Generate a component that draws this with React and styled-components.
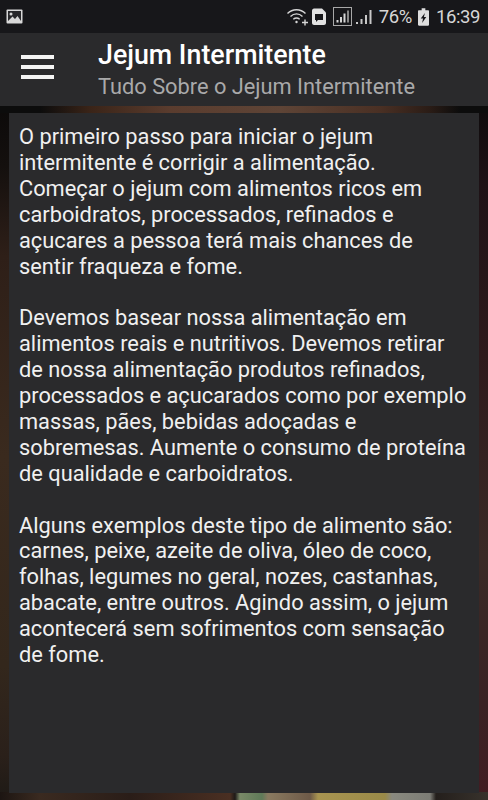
import styled, { createGlobalStyle } from "styled-components";

const GlobalStyle = createGlobalStyle`
  html, body {
    margin: 0;
    padding: 0;
    background: #1a1512;
  }
  * { box-sizing: border-box; }
`;

const Screen = styled.div`
  width: 488px;
  height: 800px;
  display: flex;
  flex-direction: column;
  overflow: hidden;
  font-family: Roboto, "Liberation Sans", sans-serif;
  color: #fff;
`;

const StatusBar = styled.div`
  height: 33px;
  flex: none;
  display: flex;
  align-items: center;
  justify-content: space-between;
  padding: 0 8px 0 6px;
  background: #17171a;
  color: #d6d6d6;
`;

const StatusRight = styled.div`
  display: flex;
  align-items: center;
  font-size: 18.5px;
  letter-spacing: -0.4px;
`;

const Percent = styled.span`
  margin: 0 6px 0 7px;
`;

const Clock = styled.span`
  margin-left: 7px;
`;

const Toolbar = styled.header`
  height: 73px;
  flex: none;
  display: flex;
  align-items: center;
  background: #2a2a2c;
`;

const MenuButton = styled.div`
  width: 98px;
  flex: none;
  display: flex;
  flex-direction: column;
  gap: 6px;
  margin-top: -5px;
  padding: 0 0 0 21px;
`;

const MenuLine = styled.span`
  display: block;
  width: 33px;
  height: 4px;
  background: #f4f4f4;
`;

const Titles = styled.div`
  display: flex;
  flex-direction: column;
  margin-top: 3px;
`;

const Title = styled.h1`
  margin: 0;
  font-size: 26.8px;
  line-height: 32px;
  font-weight: 500;
  color: #fff;
`;

const Subtitle = styled.div`
  font-size: 21.8px;
  line-height: 32px;
  color: #a9a9aa;
`;

// the page behind the card is a blurred photo, only its edges stay visible
const Backdrop = styled.main`
  flex: 1;
  min-height: 0;
  display: flex;
  padding: 7px 9px 7.5px;
  background:
    linear-gradient(90deg, #1c1512 0, #3a2a20 40px, #2a1d18 130px, #4a2f22 230px, #1e1a18 235px, #7a8a68 240px, #5f7a58 262px, #8a7a60 268px, #6e5a48 310px, #a89450 318px, #9a8a48 385px, #8a8a80 392px, #7d7d76 430px, #241f1c 436px, #38322c 488px) bottom / 100% 8px no-repeat,
    linear-gradient(90deg, #0c0c0c 0, #0c0c0c 40px, #3a2418 90px, #5a3c2e 170px, #5e4436 280px, #4a3024 380px, #2a1c16 430px, #0c0c0c 460px) top / 100% 7px no-repeat,
    linear-gradient(180deg, #0c0a0a 0, #14100e 60px, #2e1f18 150px, #3a2a1e 350px, #33271c 560px, #2a201a 650px, #1e1a16 693px) left / 9px 100% no-repeat,
    linear-gradient(180deg, #0e0b0c 0, #1e1216 80px, #2e1a1c 250px, #3a2a26 450px, #3a2224 600px, #421c22 693px) right / 9px 100% no-repeat;
`;

const Card = styled.article`
  flex: 1;
  padding: 11px 10px 0;
  background: #2a2a2c;
`;

const Paragraph = styled.p`
  margin: 0 0 25.9px;
  font-size: 21.8px;
  line-height: 25.9px;
  color: #f0f0f0;
`;

const WifiIcon = () => (
  <svg width="22" height="20" viewBox="0 0 22 20" fill="none" stroke="#d6d6d6" strokeWidth="1.4" style={{ marginRight: 3 }}>
    <path d="M0.5 6.5C5.5 1.5 13.5 1.5 18.5 6.5" />
    <path d="M3.5 9.5C7 6 12 6 15.5 9.5" />
    <path d="M6.3 12.3C8.5 10.5 10.5 10.5 12.7 12.3" />
    <circle cx="9.5" cy="15" r="1.2" fill="#d6d6d6" stroke="none" />
    <path d="M15 15.5H21M18 12.5V18.5" />
  </svg>
);

const MessageIcon = () => (
  <svg width="14" height="17" viewBox="0 0 14 17" style={{ marginRight: 7 }}>
    <path d="M2 0.5H10L14 4.5V15C14 16 13 17 12 17H2C1 17 0 16 0 15V2.5C0 1.5 1 0.5 2 0.5Z" fill="#e2e2e2" />
    <path d="M3 6H11V12H6L4 14V12H3Z" fill="#17171a" />
  </svg>
);

const SignalBoxIcon = () => (
  <svg width="19" height="19" viewBox="0 0 19 19" fill="none" style={{ marginRight: 4 }}>
    <rect x="0.5" y="0.5" width="18" height="18" stroke="#a8a8a8" />
    <rect x="3.5" y="13" width="2" height="2.5" fill="#d6d6d6" />
    <rect x="7" y="10" width="2" height="5.5" fill="#d6d6d6" />
    <rect x="10.5" y="6.5" width="2" height="9" fill="#d6d6d6" />
    <rect x="14" y="3.5" width="2" height="12" fill="#8a8a8a" />
  </svg>
);

const SignalIcon = () => (
  <svg width="16" height="16" viewBox="0 0 16 16" fill="#c8c8c8">
    <rect x="0" y="13" width="2" height="2" />
    <rect x="4.5" y="10" width="2" height="5" />
    <rect x="9" y="6" width="2" height="9" />
    <rect x="13.5" y="1" width="2" height="14" />
  </svg>
);

const BatteryIcon = () => (
  <svg width="11" height="18" viewBox="0 0 12 19">
    <path d="M4 0H8V2H11C11.5 2 12 2.5 12 3V18C12 18.5 11.5 19 11 19H1C0.5 19 0 18.5 0 18V3C0 2.5 0.5 2 1 2H4Z" fill="#dedede" />
    <path d="M7.5 5L3 11H5.5L4.5 16L9 9.5H6.5Z" fill="#17171a" />
  </svg>
);

const PictureIcon = () => (
  <svg width="17" height="15" viewBox="0 0 17 15">
    <rect x="0.5" y="0.5" width="16" height="14" rx="1" fill="#d8d8d8" />
    <rect x="2" y="2" width="13" height="10" fill="#27272a" />
    <circle cx="5" cy="5" r="1.5" fill="#d8d8d8" />
    <path d="M2 12L6.5 7.5L9 10L11.5 7L15 12Z" fill="#d8d8d8" />
  </svg>
);

const App = () => {
  return (
    <>
      <GlobalStyle />
      <Screen>
        <StatusBar>
          <PictureIcon />
          <StatusRight>
            <WifiIcon />
            <MessageIcon />
            <SignalBoxIcon />
            <SignalIcon />
            <Percent>76%</Percent>
            <BatteryIcon />
            <Clock>16:39</Clock>
          </StatusRight>
        </StatusBar>
        <Toolbar>
          <MenuButton>
            <MenuLine />
            <MenuLine />
            <MenuLine />
          </MenuButton>
          <Titles>
            <Title>Jejum Intermitente</Title>
            <Subtitle>Tudo Sobre o Jejum Intermitente</Subtitle>
          </Titles>
        </Toolbar>
        <Backdrop>
          <Card>
            <Paragraph>
              O primeiro passo para iniciar o jejum<br />
              intermitente é corrigir a alimentação.<br />
              Começar o jejum com alimentos ricos em<br />
              carboidratos, processados, refinados e<br />
              açucares a pessoa terá mais chances de<br />
              sentir fraqueza e fome.
            </Paragraph>
            <Paragraph>
              Devemos basear nossa alimentação em<br />
              alimentos reais e nutritivos. Devemos retirar<br />
              de nossa alimentação produtos refinados,<br />
              processados e açucarados como por exemplo<br />
              massas, pães, bebidas adoçadas e<br />
              sobremesas. Aumente o consumo de proteína<br />
              de qualidade e carboidratos.
            </Paragraph>
            <Paragraph>
              Alguns exemplos deste tipo de alimento são:<br />
              carnes, peixe, azeite de oliva, óleo de coco,<br />
              folhas, legumes no geral, nozes, castanhas,<br />
              abacate, entre outros. Agindo assim, o jejum<br />
              acontecerá sem sofrimentos com sensação<br />
              de fome.
            </Paragraph>
          </Card>
        </Backdrop>
      </Screen>
    </>
  );
};

export default App;
